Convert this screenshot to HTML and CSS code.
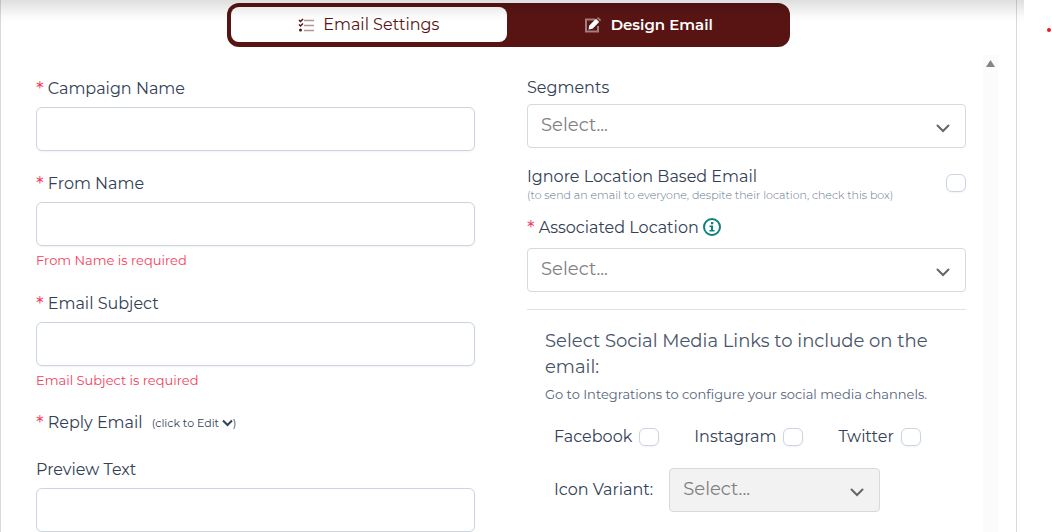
FILE: index.html
```html
<!DOCTYPE html>
<html lang="en">
<head>
  <meta charset="UTF-8" />
  <meta name="viewport" content="width=device-width, initial-scale=1.0"/>
  <title>Email Settings</title>
  <link rel="stylesheet" href="styles.css">
</head>
<body>

  <main class="panel">
    <div class="tabs">
      <button class="tab active" type="button">
        <svg width="16" height="16" viewBox="0 0 16 16" fill="none" stroke="#581413">
          <path d="M1 3l1.500 1.500L5 2M1 7.500L2.500 9 5 6.500" stroke-width="1.500"/>
          <circle cx="2.500" cy="13" r="1.500" fill="#581413" stroke="none"/>
          <path d="M6 3.500h10M6 8.500h10M6 13.500h10" stroke-width="1.500" opacity=".45"/>
        </svg>
        Email Settings
      </button>
      <button class="tab" type="button">
        <svg width="18" height="16" viewBox="0 0 18 16">
          <path d="M11 2.500H2v12h12V9" fill="none" stroke="#fff" stroke-width="2" opacity=".45"/>
          <path d="M4.500 12.500l.8-4L12 1.800l3.200 3.200-6.700 6.700z" fill="#fff"/>
          <path d="M12.800 1.200L14 0l3.200 3L16 4.200z" fill="#fff" opacity=".45"/>
        </svg>
        Design Email
      </button>
    </div>

    <div class="scroll-area">
      <form class="columns">
        <div class="column left">
          <div class="field">
            <label for="campaignName"><span class="star">*</span>Campaign Name</label>
            <input id="campaignName" class="text-input" type="text" />
          </div>
          <div class="field">
            <label for="fromName"><span class="star">*</span>From Name</label>
            <input id="fromName" class="text-input" type="text" />
            <p class="error">From Name is required</p>
          </div>
          <div class="field">
            <label for="emailSubject"><span class="star">*</span>Email Subject</label>
            <input id="emailSubject" class="text-input" type="text" />
            <p class="error">Email Subject is required</p>
          </div>
          <div class="reply">
            <span><span class="star">*</span>Reply Email</span>
            <button class="edit" type="button">(click to Edit
              <svg width="11" height="8" viewBox="0 0 11 8"><path d="M1 1.500l4.500 4.500L10 1.500" fill="none" stroke="#334155" stroke-width="2"/></svg>)</button>
          </div>
          <div class="field">
            <label for="previewText">Preview Text</label>
            <input id="previewText" class="text-input" type="text" />
          </div>
        </div>

        <div class="column right">
          <div class="field">
            <label for="segments">Segments</label>
            <div class="select">
              <select id="segments"><option>Select...</option></select>
              <svg width="14" height="9" viewBox="0 0 14 9"><path d="M1.500 1.500L7 7l5.500-5.500"/></svg>
            </div>
          </div>

          <div class="ignore">
            <label for="ignoreLocation">Ignore Location Based Email
              <small>(to send an email to everyone, despite their location, check this box)</small>
            </label>
            <input id="ignoreLocation" class="check" type="checkbox" />
          </div>

          <div class="field location">
            <label for="location"><span class="star">*</span>Associated Location
              <svg class="info" width="18" height="18" viewBox="0 0 18 18">
                <circle cx="9" cy="9" r="8" fill="none" stroke="#0f8080" stroke-width="2"/>
                <path d="M6.500 7.500h3.500V12h1.500v1.500h-5V12H8V9H6.500zM8 4h2.300v2.300H8z" fill="#0f8080"/>
              </svg>
            </label>
            <div class="select">
              <select id="location"><option>Select...</option></select>
              <svg width="14" height="9" viewBox="0 0 14 9"><path d="M1.500 1.500L7 7l5.500-5.500"/></svg>
            </div>
          </div>

          <section class="social">
            <h2>Select Social Media Links to include on the email:</h2>
            <p>Go to Integrations to configure your social media channels.</p>
            <div class="checks">
              <label>Facebook <input class="check" type="checkbox" /></label>
              <label>Instagram <input class="check" type="checkbox" /></label>
              <label>Twitter <input class="check" type="checkbox" /></label>
            </div>
            <div class="variant">
              <label for="iconVariant">Icon Variant:</label>
              <div class="select">
                <select id="iconVariant" disabled><option>Select...</option></select>
                <svg width="14" height="9" viewBox="0 0 14 9"><path d="M1.500 1.500L7 7l5.500-5.500"/></svg>
              </div>
            </div>
          </section>
        </div>
      </form>
      <div class="track">
        <svg width="9" height="7" viewBox="0 0 9 7"><path d="M4.500 0L9 7H0z" fill="#858585"/></svg>
      </div>
    </div>
  </main>

  <aside class="side">
    <span class="dot"></span>
  </aside>

</body>
</html>
```

FILE: styles.css
```css
* { box-sizing: border-box; }

body {
  display: flex;
  height: 100vh;
  margin: 0;
  overflow: hidden;
  background: #fff;
  color: #334155;
  font: 16px/24px Montserrat, Inter, sans-serif;
}

h2, p { margin: 0; }
button, input, select { font: inherit; color: inherit; }

.panel {
  display: flex;
  flex: 1;
  flex-direction: column;
  min-width: 0;
  padding: 3px 18px 0 35px;
  border: solid #d9d9d9;
  border-width: 0 1px;
}

/* shadow under the page header */
body::before {
  content: "";
  position: absolute;
  top: 0;
  left: 0;
  right: 28px;
  height: 23px;
  background: linear-gradient(rgba(0, 0, 0, .13), rgba(0, 0, 0, .02) 70%, transparent);
  pointer-events: none;
}

.tabs {
  display: flex;
  align-self: center;
  gap: 4px;
  width: 100%;
  max-width: 563px;
  height: 44px;
  margin-right: 17px;
  padding: 4px 4px 5px;
  border-radius: 12px;
  background: #581413;
}
.tab {
  display: flex;
  flex: 1;
  align-items: center;
  justify-content: center;
  gap: 9px;
  border: 0;
  border-radius: 8px;
  background: none;
  color: #fff;
  font-size: 15px;
  font-weight: 600;
}
.tab.active {
  background: #fff;
  color: #581413;
  font-size: 16px;
  font-weight: 400;
}

.scroll-area {
  display: flex;
  flex: 1;
  gap: 17px;
  min-height: 0;
  margin-top: 8px;
  overflow: hidden;
}
.columns {
  display: grid;
  flex: 1;
  grid-template-columns: 1fr 1fr;
  gap: 52px;
  padding-top: 21px;
}
.track {
  width: 15px;
  padding: 5px 3px;
  background: #fbfbfb;
  line-height: 0;
}

.field { margin-bottom: 20px; }
.field > label { display: block; }
.left .field > label {
  padding-top: 1px;
  margin-bottom: 6px;
}
.star {
  margin-right: 4px;
  color: #f43f5e;
  font-size: 20px;
  line-height: 0;
  vertical-align: -2px;
}
.text-input {
  display: block;
  width: 100%;
  height: 44px;
  padding: 8px 12px;
  border: 1px solid #cbd5e1;
  border-radius: 6px;
  background: #fff;
  box-shadow: 0 1px 2px rgba(0, 0, 0, .05);
}
.error {
  margin: 4px 0 21px;
  color: #f43f5e;
  font-size: 13px;
  line-height: 20px;
}
.reply {
  display: flex;
  align-items: flex-start;
  gap: 9px;
  height: 26px;
  margin-bottom: 20px;
}
.edit {
  padding: 0;
  border: 0;
  background: none;
  font-size: 11px;
  line-height: 24px;
}

.right .field > label { margin-bottom: 4px; }
.select { position: relative; }
.select select {
  display: block;
  width: 100%;
  height: 44px;
  padding: 0 40px 2px 13px;
  border: 1px solid #d9d9d9;
  border-radius: 4px;
  appearance: none;
  background: #fff;
  color: #808080;
  font-size: 18px;
}
.select select:disabled {
  background: #f2f2f2;
  opacity: 1;
}
.select svg {
  position: absolute;
  top: 20px;
  right: 16px;
  fill: none;
  stroke: #666;
  stroke-linecap: round;
  stroke-width: 2;
  pointer-events: none;
}

.check {
  flex: none;
  width: 20px;
  height: 18px;
  margin: 0;
  border: 1px solid #cbd5e1;
  border-radius: 6px;
  appearance: none;
  background: #fff;
  box-shadow: 0 1px 2px rgba(0, 0, 0, .05);
}
.check:checked { background: #581413; }

.ignore {
  display: flex;
  align-items: center;
  justify-content: space-between;
  margin: -3px 0 15px;
}
.ignore small {
  display: block;
  color: #64748b;
  font-size: 11px;
  font-weight: 300;
  line-height: 12px;
}
.right .location { margin-bottom: 17px; }
.right .location > label { margin-bottom: 8px; }
.info { vertical-align: -3px; }

.social {
  padding: 18px 18px 0;
  border-top: 1px solid #e2e2e2;
}
.social h2 {
  color: #475569;
  font-size: 18px;
  font-weight: 400;
  line-height: 26px;
}
.social p {
  margin-top: 4px;
  color: #56657a;
  font-size: 13px;
  line-height: 20px;
}
.checks {
  display: flex;
  gap: 35px;
  margin: 21px 9px 19px;
}
.checks label {
  display: flex;
  align-items: center;
  gap: 7px;
}
.variant {
  display: flex;
  align-items: center;
  gap: 16px;
  margin: 0 9px;
}
.variant .select { width: 211px; }

.side {
  width: 35px;
  padding: 28px 1px;
}
.dot {
  display: block;
  width: 4px;
  height: 4px;
  margin-left: auto;
  border-radius: 50%;
  background: #e81c1c;
}
```
